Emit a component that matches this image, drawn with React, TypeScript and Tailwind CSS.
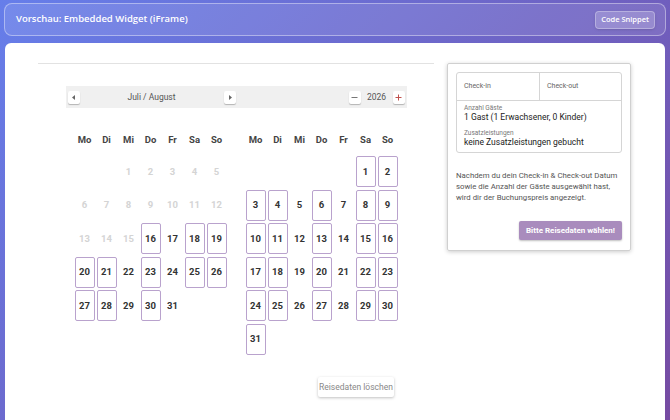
import React from "react";

type Day = { n: number; kind: "off" | "plain" | "box" } | null;

const july: Day[] = (() => {
  const out: Day[] = [null, null];
  for (let d = 1; d <= 31; d++) {
    const dow = (d + 1) % 7; // 0 = Mo
    let kind: "off" | "plain" | "box" = "box";
    if (d < 16) kind = "off";
    else if (dow === 2 || dow === 4) kind = "plain";
    out.push({ n: d, kind });
  }
  return out;
})();

const august: Day[] = (() => {
  const out: Day[] = [null, null, null, null, null];
  for (let d = 1; d <= 31; d++) {
    const dow = (d + 4) % 7;
    const kind = dow === 2 || dow === 4 ? "plain" : "box";
    out.push({ n: d, kind });
  }
  return out;
})();

const weekdays = ["Mo", "Di", "Mi", "Do", "Fr", "Sa", "So"];

function Month({ days }: { days: Day[] }) {
  return (
    <div>
      <div className="grid h-[30px] grid-cols-[repeat(7,22px)] items-center">
        {weekdays.map((w) => (
          <div key={w} className="text-center text-[9.5px] font-bold text-[#444]">
            {w}
          </div>
        ))}
      </div>
      <div className="grid grid-cols-[repeat(7,22px)] auto-rows-[33.5px]">
        {days.map((d, i) => (
          <div key={i} className="flex items-center justify-center">
            {d && (
              <div
                className={
                  "flex h-[31px] w-[20px] items-center justify-center rounded-[2px] text-[9.5px] font-bold " +
                  (d.kind === "off"
                    ? "text-[#d4d4d4]"
                    : d.kind === "box"
                    ? "border border-[#b9a2cd] text-[#333]"
                    : "text-[#333]")
                }
              >
                {d.n}
              </div>
            )}
          </div>
        ))}
      </div>
    </div>
  );
}

function SmallBtn({ children }: { children: React.ReactNode }) {
  return (
    <div className="flex h-[13px] w-[12px] items-center justify-center rounded-[2px] bg-white text-[9px] leading-none text-[#666] shadow-[0_1px_1px_rgba(0,0,0,0.25)]">
      {children}
    </div>
  );
}

export default function App() {
  return (
    <div className="h-[420px] w-[670px] overflow-hidden bg-[linear-gradient(135deg,#667eea_0%,#764ba2_100%)] px-[4px] pt-[3px] font-['Roboto',sans-serif]">
      <div className="flex h-[33px] items-center justify-between rounded-lg border border-white/40 bg-white/10 pl-[11px] pr-[10px]">
        <span className="font-['Open_Sans',sans-serif] text-[9.5px] font-semibold text-white">
          Vorschau: Embedded Widget (iFrame)
        </span>
        <span className="flex h-[18px] items-center rounded border border-white/30 bg-white/20 px-[5px] font-['Open_Sans',sans-serif] text-[7.5px] font-semibold text-white shadow-sm">
          Code Snippet
        </span>
      </div>

      <div className="mx-px mt-[7px] flex h-[400px] rounded-t-md bg-white pl-[33px] pt-[20px]">
        <div className="w-[396px] border-t border-[#e2e2e2]">
          <div className="mx-auto mt-[22px] flex h-[22px] w-[341px] items-center bg-[#f0f0f0] px-[2px] text-[8.5px] text-[#555]">
            <SmallBtn>
              <svg width="4" height="5" viewBox="0 0 4 5"><path d="M3 0 L0 2.5 L3 5Z" fill="#666" /></svg>
            </SmallBtn>
            <div className="w-[144px] text-center">Juli / August</div>
            <SmallBtn>
              <svg width="4" height="5" viewBox="0 0 4 5"><path d="M1 0 L4 2.5 L1 5Z" fill="#666" /></svg>
            </SmallBtn>
            <div className="flex-1" />
            <SmallBtn>
              <svg width="7" height="7" viewBox="0 0 7 7"><path d="M0.5 3.5 H6.5" stroke="#777" strokeWidth="1" /></svg>
            </SmallBtn>
            <div className="w-[32px] text-center">2026</div>
            <SmallBtn>
              <svg width="7" height="7" viewBox="0 0 7 7"><path d="M0.5 3.5 H6.5 M3.5 0.5 V6.5" stroke="#c0504d" strokeWidth="1" /></svg>
            </SmallBtn>
          </div>

          <div className="mt-[17px] flex justify-center gap-[17px]">
            <Month days={july} />
            <Month days={august} />
          </div>

          <div className="mt-[21px] flex justify-end pr-[40px]">
            <div className="flex h-[20px] w-[76px] items-center justify-center rounded-[2px] bg-white text-[8.5px] text-[#888] shadow-[0_1px_3px_rgba(0,0,0,0.25)]">
              Reisedaten löschen
            </div>
          </div>
        </div>

        <div className="ml-[13px] flex h-[188px] w-[184px] flex-col rounded-[2px] border border-[#d0d0d0] p-[8px] shadow-[0_1px_4px_rgba(0,0,0,0.2)]">
          <div className="rounded-[3px] border border-[#d5d5d5]">
            <div className="flex h-[28px] border-b border-[#d5d5d5] text-[7px] text-[#666]">
              <div className="flex w-[83px] items-center border-r border-[#d5d5d5] pl-[7px]">Check-in</div>
              <div className="flex flex-1 items-center pl-[7px]">Check-out</div>
            </div>
            <div className="px-[7px] pb-[4px] pt-[3px]">
              <div className="text-[6.5px] leading-[8px] text-[#777]">Anzahl Gäste</div>
              <div className="text-[8.5px] leading-[11px] text-[#222]">1 Gast (1 Erwachsener, 0 Kinder)</div>
              <div className="mt-[6px] text-[6.5px] leading-[8px] text-[#777]">Zusatzleistungen</div>
              <div className="text-[8.5px] leading-[11px] text-[#222]">keine Zusatzleistungen gebucht</div>
            </div>
          </div>
          <p className="mt-[17px] text-[7.8px] leading-[11px] text-[#555]">
            Nachdem du dein Check-in &amp; Check-out Datum sowie die Anzahl der Gäste ausgewählt hast, wird dir der Buchungspreis angezeigt.
          </p>
          <div className="mt-[18px] flex justify-end">
            <div className="flex h-[19px] w-[103px] items-center justify-center rounded-[2px] bg-[#a98cbd] text-[8px] font-bold text-white shadow-[0_1px_2px_rgba(0,0,0,0.25)]">
              Bitte Reisedaten wählen!
            </div>
          </div>
        </div>
      </div>
    </div>
  );
}
